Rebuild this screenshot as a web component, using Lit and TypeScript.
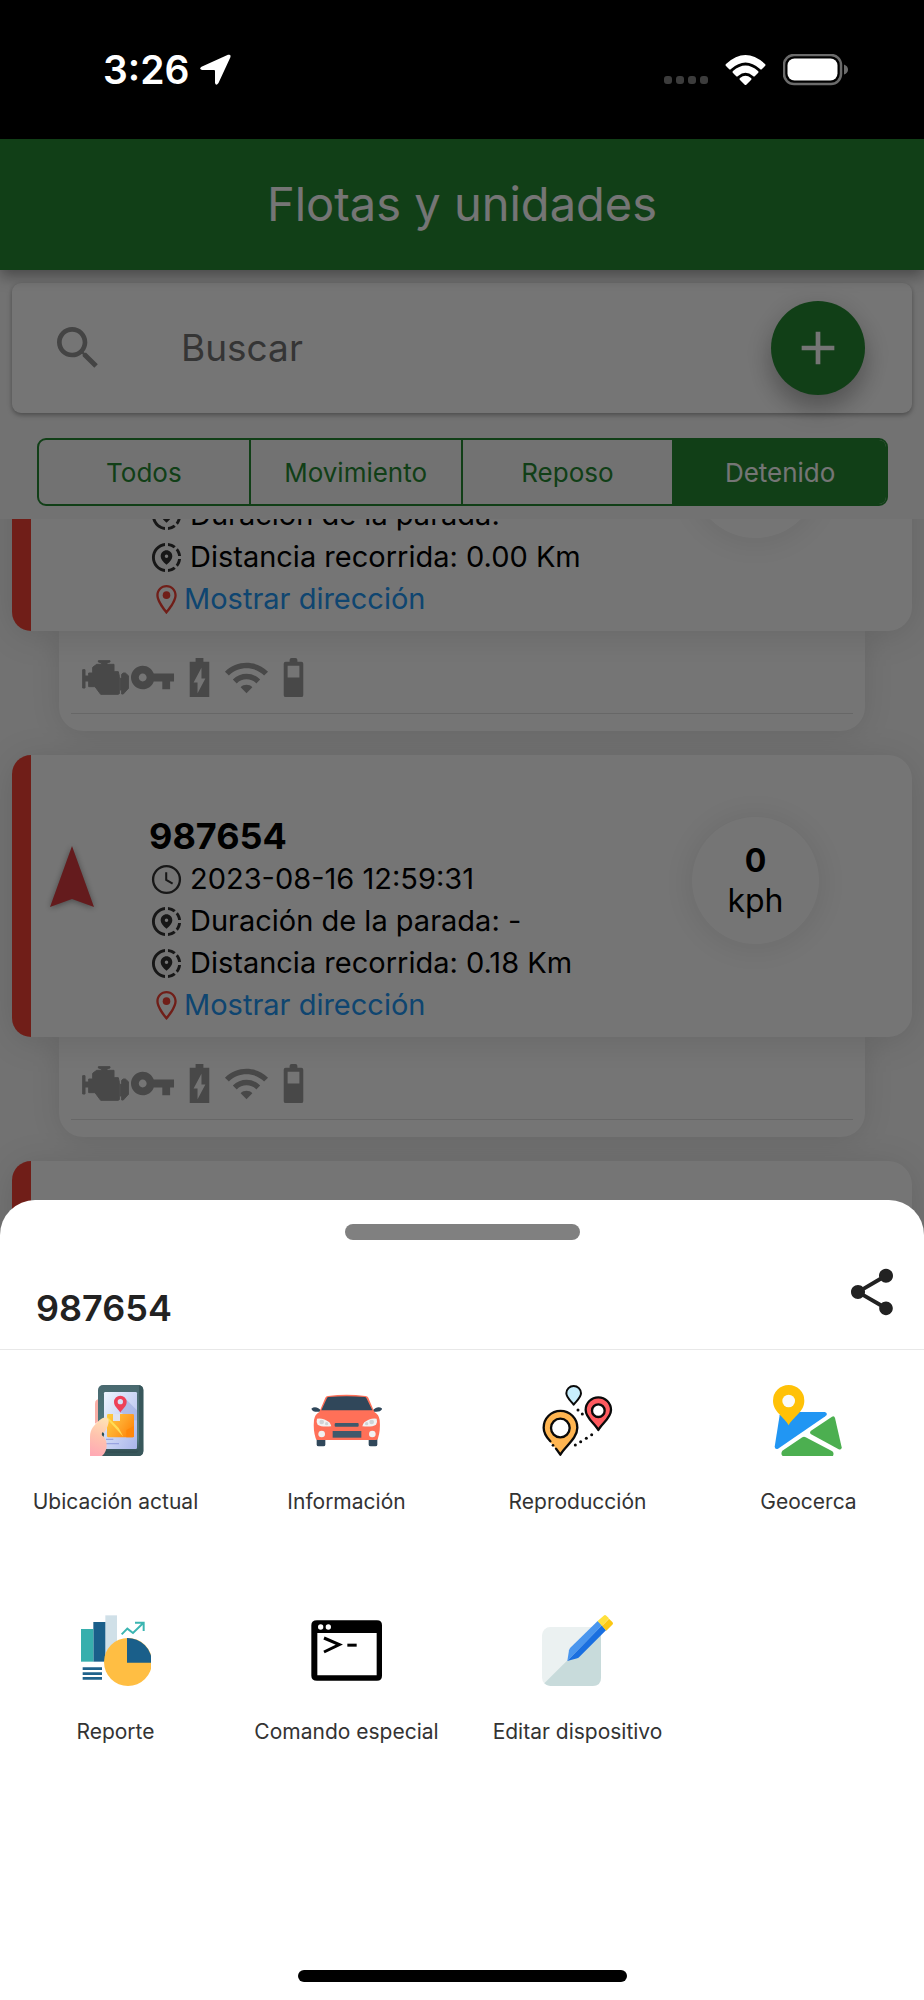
import { LitElement, html, css, svg, nothing } from "lit";
import { customElement, property, state } from "lit/decorators.js";
import { classMap } from "lit/directives/class-map.js";

interface Unit {
  name?: string;
  time?: string;
  stop?: string;
  distance?: string;
  speed?: number;
}

const units: Unit[] = [
  { stop: "-", distance: "0.00 Km" },
  { name: "987654", time: "2023-08-16 12:59:31", stop: "-", distance: "0.18 Km", speed: 0 },
  {},
];

const filters = ["Todos", "Movimiento", "Reposo", "Detenido"];

const glyph = (body: unknown, box = "0 0 24 24") =>
  html`<svg class="glyph" viewBox=${box} aria-hidden="true">${body}</svg>`;

const searchIcon = svg`<path d="M15.5 14h-.79l-.28-.27C15.41 12.59 16 11.11 16 9.5 16 5.91 13.09 3 9.5 3S3 5.91 3 9.5 5.91 16 9.5 16c1.61 0 3.09-.59 4.23-1.57l.27.28v.79l5 4.99L20.49 19l-4.99-5zm-6 0C7.01 14 5 11.99 5 9.5S7.01 5 9.5 5 14 7.01 14 9.5 11.99 14 9.5 14z"/>`;
const addIcon = svg`<path d="M19 13h-6v6h-2v-6H5v-2h6V5h2v6h6v2z"/>`;
const clockIcon = svg`<circle cx="12" cy="12" r="9.2" fill="none" stroke="currentColor" stroke-width="1.6"/><path d="M11.8 7v5.3l4.4 2.6" fill="none" stroke="currentColor" stroke-width="1.4"/>`;
const trackIcon = svg`<path d="M13.02 19.93v2.02c2.01-.2 3.84-1 5.32-2.21l-1.42-1.43c-1.11.86-2.44 1.44-3.9 1.62zM4.03 12c0-4.05 3.03-7.41 6.95-7.93V2.05C5.95 2.58 2.03 6.84 2.03 12c0 5.16 3.92 9.42 8.95 9.95v-2.02c-3.92-.52-6.95-3.88-6.95-7.93zm15.92-1h2.02c-.2-2.01-1-3.84-2.21-5.32l-1.43 1.43c.86 1.1 1.44 2.43 1.62 3.89zm-1.61-6.74c-1.48-1.21-3.32-2.01-5.32-2.21v2.02c1.46.18 2.79.76 3.9 1.62l1.42-1.43zm-.01 12.64l1.43 1.42c1.21-1.48 2.01-3.31 2.21-5.32h-2.02c-.18 1.46-.76 2.79-1.62 3.9z"/><path fill-rule="evenodd" d="M16 11.1C16 8.61 14.1 7 12 7s-4 1.61-4 4.1c0 1.66 1.33 3.63 4 5.9 2.67-2.27 4-4.24 4-5.9zm-4 1.2a1.2 1.2 0 1 1 0-2.4 1.2 1.2 0 0 1 0 2.4z"/>`;
const placeIcon = svg`<path d="M12 2C8.13 2 5 5.13 5 9c0 5.25 7 13 7 13s7-7.75 7-13c0-3.87-3.13-7-7-7zM6.6 9c0-2.98 2.42-5.4 5.4-5.4s5.4 2.42 5.4 5.4c0 2.98-3.1 7.5-5.4 10.4C9.7 16.5 6.6 11.9 6.6 9z"/><circle cx="12" cy="9" r="2.6"/>`;
const keyIcon = svg`<path d="M12.65 10C11.83 7.67 9.61 6 7 6c-3.31 0-6 2.69-6 6s2.69 6 6 6c2.61 0 4.83-1.67 5.65-4H17v4h4v-4h2v-4H12.65zM7 14c-1.1 0-2-.9-2-2s.9-2 2-2 2 .9 2 2-.9 2-2 2z"/>`;
const chargeIcon = svg`<path d="M17 4h-3V2h-4v2H7v18h10V4zm-6 16v-5.5H9L13 7v5.5h2L11 20z"/>`;
const wifiIcon = svg`<path d="M1 9l2 2c4.97-4.97 13.03-4.97 18 0l2-2C16.93 2.93 7.08 2.93 1 9zm8 8l3 3 3-3c-1.65-1.66-4.34-1.66-6 0zm-4-4l2 2c2.76-2.76 7.24-2.76 10 0l2-2C15.14 9.14 8.87 9.14 5 13z"/>`;
const halfBatteryIcon = svg`<path fill-rule="evenodd" d="M10 4V3a1 1 0 0 1 1-1h2a1 1 0 0 1 1 1v1h2a1 1 0 0 1 1 1v16a1 1 0 0 1-1 1H8a1 1 0 0 1-1-1V5a1 1 0 0 1 1-1zM9 6h6v6H9z"/>`;
const engineIcon = svg`<g stroke="currentColor" stroke-width="3" stroke-linejoin="round"><path d="M249 509h7v19h11v-9h12v-17l12-9h14v-5l-9-2v-4h35v4l-9 2v5h21v22h13l3 14v52l-4 2h-52l-17-23h-19v-17h-11v21h-7z"/><path d="M366 523l5-4h6l10 9v36l-16 18h-5v-10l-4-2v-35l4-2z"/></g>`;
const shareIcon = svg`<path d="M18 16.08c-.76 0-1.44.3-1.96.77L8.91 12.7c.05-.23.09-.46.09-.7s-.04-.47-.09-.7l7.05-4.11c.54.5 1.25.81 2.04.81 1.66 0 3-1.34 3-3s-1.34-3-3-3-3 1.34-3 3c0 .24.04.47.09.7L8.04 9.81C7.5 9.31 6.79 9 6 9c-1.66 0-3 1.34-3 3s1.34 3 3 3c.79 0 1.5-.31 2.04-.81l7.12 4.16c-.05.21-.08.43-.08.65 0 1.61 1.31 2.92 2.92 2.92 1.61 0 2.92-1.31 2.92-2.92s-1.31-2.92-2.92-2.92z"/>`;

const phoneArt = svg`
  <defs>
    <linearGradient id="ph-frame" x1="0" y1="0" x2="0" y2="1"><stop offset="0" stop-color="#49696f"/><stop offset=".75" stop-color="#4f7b80"/><stop offset="1" stop-color="#2b4347"/></linearGradient>
    <linearGradient id="ph-screen" x1="0" y1="0" x2="1" y2="1"><stop offset="0" stop-color="#eef5ff"/><stop offset="1" stop-color="#a9b5ea"/></linearGradient>
    <linearGradient id="ph-box" x1="0" y1="0" x2="1" y2=".6"><stop offset="0" stop-color="#ffcf3f"/><stop offset=".6" stop-color="#ffa62b"/><stop offset="1" stop-color="#ff8a0c"/></linearGradient>
    <linearGradient id="ph-hand" x1=".6" y1="0" x2=".4" y2="1"><stop offset="0" stop-color="#ffe2b4"/><stop offset=".5" stop-color="#ffc3ae"/><stop offset="1" stop-color="#ffaab4"/></linearGradient>
  </defs>
  <path d="M300 147q-15 0-15 14v60l15-10z" fill="#f9aea6"/>
  <rect x="294" y="105" width="136" height="213" rx="15" fill="url(#ph-frame)"/>
  <path d="M417 106q13 2 13 14v183q0 15-15 15H305l10-10h90q12 0 12-12z" fill="#38575b"/>
  <rect x="312" y="126" width="99" height="171" rx="4" fill="url(#ph-screen)"/>
  <path d="M380 150l31 31v30h-9l-44-26z" fill="#a3b0e3" opacity=".7"/>
  <path fill-rule="evenodd" d="M361 188c-5-11-19-17-19-32a19 19 0 0 1 38 0c0 15-14 21-19 32zm0-41a8 8 0 1 0 0 16 8 8 0 0 0 0-16z" fill="#ee4058"/>
  <rect x="321" y="192" width="81" height="70" rx="4" fill="url(#ph-box)"/>
  <path d="M322 208l48 52-14-26-34-34z" fill="#ffdd55"/>
  <path d="M379 240l23-12v30q0 4-4 4h-19z" fill="#ff870a"/>
  <path d="M339 192h21v21h-21z" fill="#dfe2ee"/>
  <path d="M318 268h22M318 281h39" stroke="#8e99dc" stroke-width="4" opacity=".8"/>
  <path d="M270 318v-57c0-24 14-36 28-50 9-9 20-12 26-5 5 6 0 22-5 31-4 9-11 13-12 19 8 8 13 16 13 29 0 14-4 24-14 33z" fill="url(#ph-hand)"/>
  <path d="M308 246q-6 7 1 13l4-6z" fill="#2f4f55"/>`;

const carArt = svg`
  <path d="M950 262h26v22q0 5-6 5h-14q-6 0-6-5zM1106 262h26v22q0 5-6 5h-14q-6 0-6-5z" fill="#30475a"/>
  <path d="M934 176q10-8 21-1l8 6-4 4q-20 3-25-9zM1147 176q-10-8-21-1l-8 6 4 4q20 3 25-9z" fill="#30475a"/>
  <path d="M984 138q56-7 112 0 7 1 9 5l18 43q14 8 16 24 3 30-5 55-1 5-6 5H953q-5 0-6-5-8-25-5-55 2-16 16-24l18-43q2-4 8-5z" fill="#ff7058"/>
  <path d="M986 141q54-5 108 0 4 0 5 3l18 37H964l17-37q1-3 5-3z" fill="#30475a"/>
  <path d="M951 206q20-3 37 11 5 6 6 12-30 3-41-5-5-9-2-18zM1130 206q-20-3-37 11-5 6-6 12 30 3 41-5 5-9 2-18z" fill="#f1f2f2"/>
  <circle cx="965" cy="216" r="7" fill="#cfd3d5"/><circle cx="980" cy="221" r="5" fill="#cfd3d5"/>
  <circle cx="1115" cy="216" r="7" fill="#cfd3d5"/><circle cx="1100" cy="221" r="5" fill="#cfd3d5"/>
  <rect x="1004" y="219" width="72" height="11" rx="3" fill="#40596b"/>
  <rect x="998" y="243" width="86" height="20" fill="#40596b"/>
  <circle cx="965" cy="252" r="10" fill="#f1f2f2"/><circle cx="1117" cy="252" r="10" fill="#f1f2f2"/>`;

const pinsArt = svg`
  <g stroke="#0a0a0a" stroke-linejoin="round" stroke-linecap="round">
    <path d="M335 164c-7-10-22-21-22-34a22 22 0 0 1 44 0c0 13-15 24-22 34z" fill="#c8effe" stroke-width="6"/>
    <path d="M409 240c-11-20-38-36-38-60a38 38 0 0 1 76 0c0 24-27 40-38 60z" fill="#ff5a5f" stroke-width="7"/>
    <circle cx="409" cy="182" r="19" fill="#fff" stroke-width="7"/>
    <path d="M295 314c-13-25-50-48-50-81a50 50 0 0 1 101 0c0 33-37 56-51 81z" fill="#ffb551" stroke="none"/>
    <path d="M265 274c-12-13-20-26-20-41a50 50 0 0 1 101 0c0 33-37 56-51 81l-13-18" fill="none" stroke-width="7"/>
    <circle cx="295" cy="234" r="28" fill="#fff" stroke-width="7"/>
  </g>
  <g fill="#0a0a0a"><circle cx="273" cy="286" r="4"/><circle cx="340" cy="285" r="4.5"/><circle cx="356" cy="275" r="4.5"/><circle cx="373" cy="265" r="4.5"/><circle cx="389" cy="254" r="4.5"/><circle cx="348" cy="180" r="4.5"/><circle cx="361" cy="192" r="4.5"/></g>`;

const mapArt = svg`
  <path d="M964 186h124q8 2 6 9l-4 4-142 97q-9 3-10-6l15-94q3-9 11-10z" fill="#2196f3"/>
  <path d="M1046 243l64-43q7-3 9 4l20 88q0 9-9 6l-84-46q-4-4 0-9z" fill="#4caf50"/>
  <path d="M961 302l60-40q5-3 10 0l80 42q6 5 2 14H962q-7-6-1-16z" fill="#4caf50"/>
  <path d="M980 226c-13-26-47-40-47-74a47 47 0 0 1 94 0c0 34-34 48-47 74z" fill="#ffc107"/>
  <circle cx="980" cy="153" r="19" fill="#fafafa"/>`;

const reportArt = svg`
  <path d="M316 76h35v139h-35z" fill="#d0e0e8"/>
  <path d="M280 96h36v119h-36z" fill="#1a5f8a"/>
  <path d="M243 117h37v98h-37z" fill="#37afad"/>
  <path d="M248 236h58M248 251h58M248 265h58" stroke="#1f628c" stroke-width="8"/>
  <path d="M365 133l17-17 17 13 30-29M405 98h26v25" fill="none" stroke="#3bb5b1" stroke-width="6"/>
  <circle cx="384" cy="216" r="72" fill="#ffbe43"/>
  <path d="M381 144a74 74 0 0 1 75 74h-75z" fill="#1a5f8a"/>`;

const consoleArt = svg`
  <path fill-rule="evenodd" d="M951 91h180q15 0 15 15v151q0 15-15 15H951q-17 0-17-15V106q0-15 17-15zm1 38v127h178V129z"/>
  <circle cx="962" cy="111" r="8" fill="#fff"/><circle cx="985" cy="111" r="8" fill="#fff"/>
  <path d="M972 144l46 20-46 22" fill="none" stroke="#000" stroke-width="9"/>
  <path d="M1042 161h28v9h-28z"/>`;

const editArt = svg`
  <rect x="240" y="111" width="177" height="177" rx="25" fill="#ebf1f1"/>
  <path d="M247 280L417 111v152q0 25-25 25H265q-11 0-18-8z" fill="#c8dbdb"/>
  <path d="M316 213l5-32q1-5 4-8l82-80 13 13z" fill="#4a96ee"/>
  <path d="M316 213l104-107 12 15-78 78q-4 4-8 6z" fill="#1a6fe0"/>
  <path d="M407 93l18-16q4-4 8 0l8 8-21 23z" fill="#ffe03c"/>
  <path d="M420 108l21-22 10 10q4 4 0 8l-18 18z" fill="#fbc712"/>`;

const actions = [
  { label: "Ubicación actual", art: phoneArt, box: "240 105 213 213" },
  { label: "Información", art: carArt, box: "933 105 213 213" },
  { label: "Reproducción", art: pinsArt, box: "240 105 213 213" },
  { label: "Geocerca", art: mapArt, box: "933 105 213 213" },
  { label: "Reporte", art: reportArt, box: "240 75 213 213" },
  { label: "Comando especial", art: consoleArt, box: "933 75 213 213" },
  { label: "Editar dispositivo", art: editArt, box: "240 75 213 213" },
];

const base = css`
  *, *::before, *::after { box-sizing: border-box; }
  h1, h2, p { margin: 0; }
  button { font: inherit; color: inherit; background: none; border: 0; padding: 0; cursor: pointer; }
  .glyph { display: block; width: 100%; height: 100%; fill: currentColor; }
`;

@customElement("status-bar")
export class StatusBar extends LitElement {
  static styles = [base, css`
    :host { display: flex; align-items: center; justify-content: space-between; height: 139px; padding: 0 76px 0 103px; background: #000; color: #fff; }
    .left, .right { display: flex; align-items: center; }
    .left { gap: 10px; }
    .right { gap: 17px; }
    .time { font-size: 39px; line-height: 48px; font-weight: 600; }
    .arrow { width: 31px; height: 31px; fill: #fff; }
    .dots { display: flex; gap: 4px; padding-top: 20px; }
    .dot { width: 8px; height: 8px; border-radius: 3px; background: #3c3c3c; }
    .wifi { width: 41px; height: 30px; fill: #fff; }
    .battery { width: 65px; height: 32px; }
  `];
  render() {
    return html`
      <div class="left">
        <span class="time">3:26</span>
        <svg class="arrow" viewBox="0 0 31 31" aria-hidden="true"><path d="M28 .8q3.200-.8 2.400 2.400L18.500 29q-2.500 3.500-3.500 0V17q0-1-1-1H2q-3.500-1-.5-3.200z"/></svg>
      </div>
      <div class="right">
        <div class="dots">${[0, 1, 2, 3].map(() => html`<span class="dot"></span>`)}</div>
        <svg class="wifi" viewBox="0 0 41 30" aria-hidden="true"><path d="M1 9Q20.500-9 40 9q1 1 0 2l-3 3q-1 1-2 0-14.500-13-29 0-1 1-2 0l-3-3q-1-1 0-2zM8 16q12.500-11 25 0 1 1 0 2l-3 3q-1 1-2 0-7.500-6.500-15 0-1 1-2 0l-3-3q-1-1 0-2zM15 23q5.500-4.500 11 0 1 1 0 2l-4.500 4.500q-1 1-2 0L15 25q-1-1 0-2z"/></svg>
        <svg class="battery" viewBox="0 0 65 32" aria-hidden="true"><rect x="1" y="1" width="57" height="29" rx="10" fill="none" stroke="#6b6b6b" stroke-width="2.500"/><rect x="4.500" y="4.500" width="50" height="22" rx="7" fill="#fff"/><path d="M61 10.500q4 1.500 4 5t-4 5z" fill="#6b6b6b"/></svg>
      </div>`;
  }
}

@customElement("unit-card")
export class UnitCard extends LitElement {
  @property({ attribute: false }) unit!: Unit;

  static styles = [base, css`
    :host { display: block; }
    .card { position: relative; display: flex; align-items: flex-start; min-height: 282px; border-left: 19px solid #f44336; border-radius: 19px 24px 24px 19px; background: #fff; box-shadow: 0 4px 36px rgba(0, 0, 0, 0.12); }
    .marker { flex: none; width: 118px; padding: 90px 0 0 17px; }
    .arrow { display: block; width: 48px; height: 66px; filter: drop-shadow(0 1px 3px rgba(0, 0, 0, 0.4)); }
    .info { flex: 1; padding: 59px 0 11px; }
    .name { min-height: 44px; font-size: 36px; line-height: 44px; font-weight: 700; }
    .row { display: flex; align-items: center; gap: 6px; min-height: 42px; font-size: 29px; line-height: 42px; white-space: nowrap; }
    .icon { flex: none; width: 35px; height: 35px; color: #333; }
    .place { gap: 0; }
    .place .icon { color: #f44336; }
    .link { color: #2196f3; text-decoration: none; }
    .speed { flex: none; display: flex; flex-direction: column; align-items: center; justify-content: center; width: 127px; height: 127px; margin: 62px 93px 0 0; border-radius: 50%; background: #fff; font-size: 32px; line-height: 40px; box-shadow: 0 2px 36px rgba(0, 0, 0, 0.1); }
    .value { font-weight: 700; }
    .sensors { margin: 0 47px; padding: 23px 12px 17px; background: #fff; border-radius: 0 0 24px 24px; box-shadow: 0 2px 30px rgba(0, 0, 0, 0.1); }
    .icons { display: flex; padding: 0 11px 12px; border-bottom: 1px solid #e0e0e0; color: #9e9e9e; }
    .sensor { width: 47px; height: 47px; }
  `];

  private details(u: Unit) {
    return html`
      <div class="info">
        <h2 class="name">${u.name}</h2>
        <p class="row"><span class="icon">${glyph(clockIcon)}</span>${u.time}</p>
        <p class="row"><span class="icon">${glyph(trackIcon)}</span>Duración de la parada: ${u.stop}</p>
        <p class="row"><span class="icon">${glyph(trackIcon)}</span>Distancia recorrida: ${u.distance}</p>
        <p class="row place"><span class="icon">${glyph(placeIcon)}</span><a class="link" href="#direccion">Mostrar dirección</a></p>
      </div>
      <div class="speed">
        ${u.speed === undefined ? nothing : html`<span class="value">${u.speed}</span><span>kph</span>`}
      </div>`;
  }

  render() {
    const u = this.unit;
    if (!u) return nothing;
    return html`
      <article class="card">
        <div class="marker">
          <svg class="arrow" viewBox="0 0 48 66" aria-hidden="true"><path d="M24 1L46 62 24 54 2 62z" fill="#d93c41"/></svg>
        </div>
        ${u.distance ? this.details(u) : nothing}
      </article>
      <div class="sensors">
        <div class="icons">
          <span class="sensor">${glyph(engineIcon, "247 462 141 141")}</span>
          ${[keyIcon, chargeIcon, wifiIcon, halfBatteryIcon].map((i) => html`<span class="sensor">${glyph(i)}</span>`)}
        </div>
      </div>`;
  }
}

@customElement("action-sheet")
export class ActionSheet extends LitElement {
  static styles = [base, css`
    :host { display: flex; flex-direction: column; padding: 24px 0 18px; border-radius: 35px 35px 0 0; background: #fff; color: #222; }
    .handle { flex: none; align-self: center; width: 235px; height: 16px; border-radius: 8px; background: #808080; }
    .head { display: flex; align-items: flex-start; justify-content: space-between; padding: 24px 24px 19px 36px; border-bottom: 1px solid #e8e8e8; }
    .title { padding-top: 22px; font-size: 36px; line-height: 44px; font-weight: 600; }
    .share { width: 56px; height: 56px; }
    .actions { display: grid; grid-template-columns: repeat(4, 1fr); grid-auto-rows: 230px; }
    .action { display: flex; flex-direction: column; align-items: center; gap: 30px; padding-top: 35px; font-size: 21px; line-height: 32px; color: #333; white-space: nowrap; }
    .art { display: block; width: 71px; height: 71px; }
    .home { align-self: center; width: 329px; height: 12px; margin-top: auto; border-radius: 6px; background: #000; }
  `];
  render() {
    return html`
      <div class="handle"></div>
      <header class="head">
        <h2 class="title">987654</h2>
        <button class="share" aria-label="Compartir">${glyph(shareIcon)}</button>
      </header>
      <div class="actions">
        ${actions.map((a) => html`
          <button class="action">
            <svg class="art" viewBox=${a.box} aria-hidden="true">${a.art}</svg>
            <span>${a.label}</span>
          </button>`)}
      </div>
      <div class="home"></div>`;
  }
}

@customElement("app-root")
export class AppRoot extends LitElement {
  @state() private active = "Detenido";

  static styles = [base, css`
    :host { position: relative; display: flex; flex-direction: column; height: 100vh; overflow: hidden; background: #f8f8f8; color: #000; font-family: Inter, "Liberation Sans", sans-serif; }
    .status { position: relative; z-index: 3; flex: none; }
    .bar { position: relative; z-index: 1; flex: none; display: flex; align-items: center; justify-content: center; height: 131px; padding-bottom: 2px; background: #278a34; color: #fff; box-shadow: 0 6px 14px rgba(0, 0, 0, 0.36); }
    .heading { font-size: 47px; line-height: 56px; font-weight: 400; }
    .search { flex: none; display: flex; align-items: center; margin: 13px 12px 0; padding: 18px 47px 18px 38px; border-radius: 9px; background: #fff; box-shadow: 0 2px 5px rgba(0, 0, 0, 0.35); }
    .lens { flex: none; width: 56px; height: 56px; color: #949494; }
    .field { flex: 1; min-width: 0; margin-left: 75px; padding: 0; border: 0; outline: 0; background: none; font: inherit; font-size: 37px; line-height: 48px; color: #000; }
    .field::placeholder { color: #757575; opacity: 1; }
    .add { flex: none; width: 94px; height: 94px; padding: 19px; border-radius: 50%; background: #278a34; color: #fff; box-shadow: 0 14px 24px rgba(0, 0, 0, 0.25), 0 2px 32px rgba(0, 0, 0, 0.08); }
    .filters { flex: none; display: grid; grid-template-columns: repeat(4, 1fr); height: 68px; margin: 25px 36px 13px 37px; border: 2px solid #278a34; border-radius: 9px; overflow: hidden; }
    .filter { font-size: 26px; color: #278a34; }
    .filter:not(:last-child) { border-right: 2px solid #278a34; }
    .filter.on { background: #278a34; color: #fff; }
    .list { flex: 1; min-height: 0; display: flex; flex-direction: column; gap: 24px; padding: 0 12px; overflow-y: auto; scrollbar-width: none; }
    .list > * { flex: none; }
    .scrim { position: absolute; inset: 0; z-index: 2; background: rgba(0, 0, 0, 0.54); }
    .sheet { position: relative; z-index: 3; flex: none; min-height: 40vh; margin-top: -36px; }
  `];

  async firstUpdated() {
    const list = this.renderRoot.querySelector<HTMLElement>(".list");
    const cards = Array.from(this.renderRoot.querySelectorAll<UnitCard>("unit-card"));
    await Promise.all(cards.map((c) => c.updateComplete));
    if (list) list.scrollTop = 170;
  }

  render() {
    return html`
      <status-bar class="status"></status-bar>
      <header class="bar"><h1 class="heading">Flotas y unidades</h1></header>
      <div class="search">
        <span class="lens">${glyph(searchIcon)}</span>
        <input class="field" type="text" placeholder="Buscar" aria-label="Buscar" />
        <button class="add" aria-label="Agregar">${glyph(addIcon)}</button>
      </div>
      <div class="filters">
        ${filters.map((f) => html`
          <button class=${classMap({ filter: true, on: f === this.active })} @click=${() => (this.active = f)}>${f}</button>`)}
      </div>
      <main class="list">${units.map((u) => html`<unit-card .unit=${u}></unit-card>`)}</main>
      <div class="scrim"></div>
      <action-sheet class="sheet"></action-sheet>`;
  }
}
